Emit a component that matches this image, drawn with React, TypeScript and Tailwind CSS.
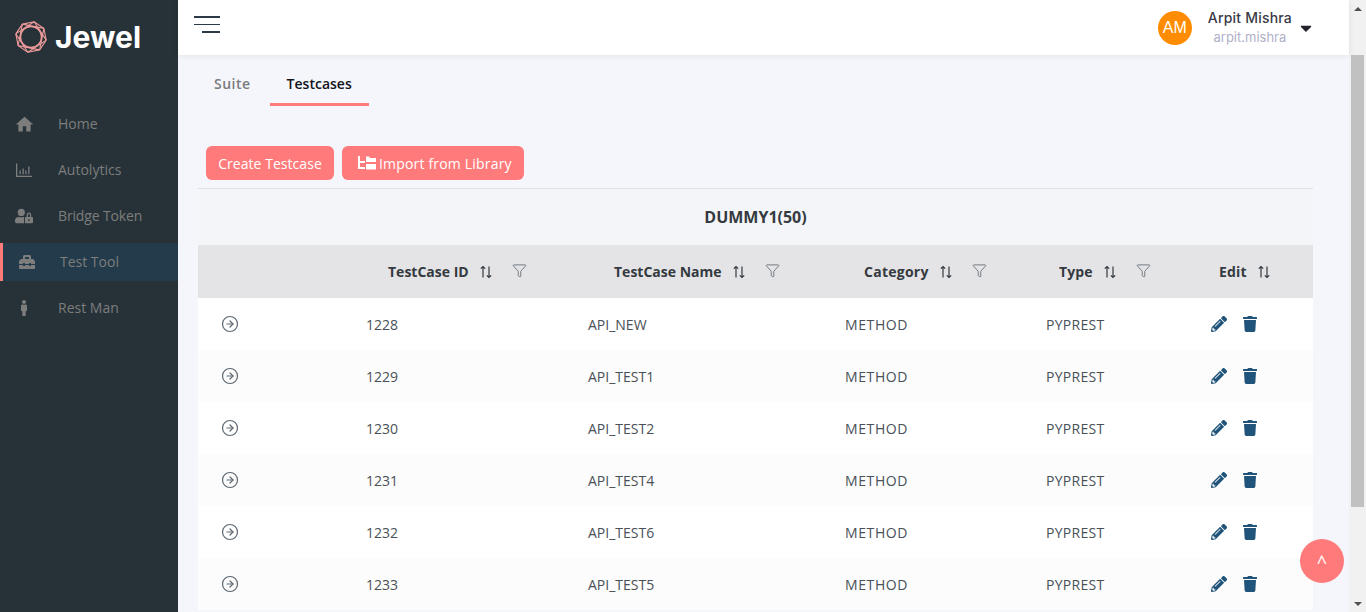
import React from "react";
import { FaUserLock, FaToolbox, FaMale, FaPencilAlt, FaTrash, FaCaretDown } from "react-icons/fa";
import { MdHome } from "react-icons/md";
import { CircleArrowRight, Funnel } from "lucide-react";

function ChartIcon({ size, className }: { size: number; className?: string }) {
  return (
    <svg width={size} height={size} viewBox="0 0 16 16" fill="currentColor" className={className}>
      <path d="M0 1.5h1.3v12.2H16V15H0z" />
      <path d="M3.5 8.5h1.3v3.7H3.5zM6.5 6.5h1.3v5.7H6.5zM9.2 8.5h1.3v3.7H9.2zM12.2 4.5h1.3v7.7h-1.3z" />
    </svg>
  );
}

const nav = [
  { label: "Home", Icon: MdHome, size: 21, labelClass: "" },
  { label: "Autolytics", Icon: ChartIcon, size: 16, labelClass: "" },
  { label: "Bridge Token", Icon: FaUserLock, size: 18, labelClass: "tracking-[-0.15px]" },
  { label: "Test Tool", Icon: FaToolbox, size: 16, active: true, labelClass: "" },
  { label: "Rest Man", Icon: FaMale, size: 16, labelClass: "" },
];

const rows = [
  ["1228", "API_NEW"],
  ["1229", "API_TEST1"],
  ["1230", "API_TEST2"],
  ["1231", "API_TEST4"],
  ["1232", "API_TEST6"],
  ["1233", "API_TEST5"],
];

function Sort() {
  return (
    <svg width="14" height="14" viewBox="0 0 14 14" fill="none" stroke="currentColor" strokeWidth="1.2" className="text-[#343a40] shrink-0">
      <path d="M4 12.5V1.5M1.8 3.7L4 1.5l2.2 2.2M10 1.5v11M7.8 10.3l2.2 2.2 2.2-2.2" />
    </svg>
  );
}

function Logo() {
  const pts = [0, 1, 2, 3, 4, 5, 6, 7].map((i) => {
    const a = (i * Math.PI) / 4 + 0.2;
    return [17 + 15.5 * Math.cos(a), 17 + 15.5 * Math.sin(a)];
  });
  const path = (step: number) =>
    pts.map((_, i) => {
      const p = pts[i];
      const q = pts[(i + step) % 8];
      return `M${p[0].toFixed(1)} ${p[1].toFixed(1)}L${q[0].toFixed(1)} ${q[1].toFixed(1)}`;
    }).join("");
  return (
    <svg width="34" height="34" viewBox="0 0 34 34" fill="none" stroke="#ee9a9a" strokeWidth="1.1">
      <path d={path(1)} />
      <path d={path(2)} />
      <circle cx="17" cy="17" r="10.5" stroke="#ee9a9a" strokeWidth="1.4" />
    </svg>
  );
}

function ImportIcon() {
  return (
    <svg width="18" height="14" viewBox="0 0 18 14" fill="white" className="shrink-0">
      <path d="M0 0h2v5h5v2H2v4h5v2H0z" />
      <path d="M8 0.5l3 0 1 1.5h6v4H8zM8 8h10v5.5H8z" />
    </svg>
  );
}

function Th({ label, pl, filter = true, labelClass = "" }: { label: string; pl: string; filter?: boolean; labelClass?: string }) {
  return (
    <th className="p-0 font-normal">
      <div className={`flex items-center ${pl}`}>
        <span className={`text-[14px] font-bold text-[#343a40] leading-5 mt-[1px] ${labelClass}`}>{label}</span>
        <span className="ml-[10px] flex"><Sort /></span>
        {filter && (
          <span className="ml-[19px] flex -mt-[3px]">
            <Funnel size={15} strokeWidth={1.5} className="text-[#6c757d]" />
          </span>
        )}
      </div>
    </th>
  );
}

export default function App() {
  return (
    <div className="flex h-[612px] w-[1366px] overflow-hidden bg-[#f5f6fb] font-['Open_Sans',sans-serif]">
      <aside className="w-[178px] shrink-0 bg-[#263238] flex flex-col">
        <div className="flex items-center h-[70px] pl-[14px] gap-[7px] mt-[2px]">
          <Logo />
          <span className="font-['Inter',sans-serif] text-[30px] font-bold text-white leading-none">Jewel</span>
        </div>
        <nav className="mt-[33px] flex flex-col">
          {nav.map(({ label, Icon, size, active, labelClass }) => (
            <div
              key={label}
              className={`flex items-center h-[38px] mb-[8px] text-[14px] text-[#7d7d7d] ${active ? "bg-[#233b4a] border-l-[3px] border-[#ff7b7b] pl-[16px]" : "pl-[16px]"}`}
            >
              <span className="w-[16px] flex justify-center"><Icon size={size} className="text-[#7d7d7d] shrink-0" /></span>
              <span className={`mb-[2px] ${labelClass} ${active ? "ml-[25px]" : "ml-[26px]"}`}>{label}</span>
            </div>
          ))}
        </nav>
      </aside>

      <div className="flex-1 min-w-0 flex flex-col relative">
        <header className="h-[55px] shrink-0 bg-white shadow-[0_1px_6px_rgba(0,0,0,0.08)] flex items-center pl-[16px] pr-[34px] z-10">
          <div className="flex flex-col items-end gap-[6px] w-[26px] -mt-[7px]">
            <span className="block h-[2px] w-[26px] bg-[#2b3a46]" />
            <span className="block h-[1px] w-[26px] bg-[#2b3a46]" />
            <span className="block h-[2px] w-[18px] bg-[#2b3a46]" />
          </div>
          <div className="ml-auto flex items-center">
            <div className="w-[34px] h-[34px] rounded-full bg-[#ff8c00] text-white text-[16px] flex items-center justify-center font-['Liberation_Sans',sans-serif]">AM</div>
            <div className="ml-[16px] flex flex-col items-center gap-[2px] font-['Inter',sans-serif]">
              <span className="text-[14px] font-medium text-[#3a3b45] leading-[17px] tracking-[0.2px]">Arpit Mishra</span>
              <span className="text-[13px] text-[#b0b0c8] leading-[18px]">arpit.mishra</span>
            </div>
            <FaCaretDown size={18} className="ml-[5px] text-[#22232b]" />
          </div>
        </header>

        <main className="flex-1 min-h-0 overflow-hidden pl-[20px] pr-[36px]">
          <div className="flex">
            <div className="h-[51px] flex items-center px-[16px] text-[14px] font-semibold tracking-[0.5px] text-[#7b7b7f] pt-[5px]">Suite</div>
            <div className="h-[51px] ml-[3px] flex items-center px-[17px] text-[14px] font-semibold text-[#14141c] pt-[9px] border-b-[3px] border-[#ff7b7b]">Testcases</div>
          </div>
          <div className="flex gap-[8px] mt-[40px] pl-[8px]">
            <button className="h-[34px] w-[128px] rounded-[6px] bg-[#ff7b7b] text-white text-[14px] tracking-[0.05px]">Create Testcase</button>
            <button className="h-[34px] w-[182px] pl-[16px] rounded-[6px] bg-[#ff7b7b] text-white text-[14px] tracking-[0.18px] flex items-center gap-[3px]">
              <ImportIcon />
              Import from Library
            </button>
          </div>
          <div className="mt-[8px] w-[1115px] border-t border-[#dee2e6]">
            <div className="h-[56px] bg-[#f4f5f9] flex items-center justify-center text-[16px] font-bold text-[#343a40]">DUMMY1(50)</div>
            <table className="w-full table-fixed border-collapse">
              <colgroup>
                <col className="w-[152px]" />
                <col className="w-[222px]" />
                <col className="w-[257px]" />
                <col className="w-[201px]" />
                <col className="w-[165px]" />
                <col className="w-[118px]" />
              </colgroup>
              <thead>
                <tr className="h-[53px] bg-[#e4e4e7]">
                  <th className="p-0" />
                  <Th label="TestCase ID" pl="pl-[38px]" />
                  <Th label="TestCase Name" pl="pl-[42px]" />
                  <Th label="Category" pl="pl-[35px]" labelClass="tracking-[0.25px]" />
                  <Th label="Type" pl="pl-[29px]" labelClass="tracking-[0.1px]" />
                  <Th label="Edit" pl="pl-[24px]" filter={false} labelClass="tracking-[0.2px]" />
                </tr>
              </thead>
              <tbody>
                {rows.map(([id, name], i) => (
                  <tr key={id} className={`h-[52px] text-[14px] text-[#495057] ${i % 2 ? "bg-[#fcfcfc]" : "bg-white"}`}>
                    <td className="p-0 pl-[23px]"><CircleArrowRight size={18} strokeWidth={1.6} className="text-[#5a6670]" /></td>
                    <td className="p-0 pl-[16px]">{id}</td>
                    <td className="p-0 pl-[16px]">{name}</td>
                    <td className="p-0 pl-[16px] tracking-[0.6px]">METHOD</td>
                    <td className="p-0 pl-[16px] tracking-[0.3px]">PYPREST</td>
                    <td className="p-0 pl-[16px]">
                      <div className="flex items-center gap-[15px]">
                        <FaPencilAlt size={16} className="text-[#20547a]" />
                        <FaTrash size={16} className="text-[#20547a]" />
                      </div>
                    </td>
                  </tr>
                ))}
              </tbody>
            </table>
          </div>
        </main>

        <button className="absolute left-[1122px] top-[539px] w-[44px] h-[44px] rounded-full bg-[#ff7b7b] text-white text-[18px] pt-[2px] flex items-center justify-center z-20 font-['Open_Sans',sans-serif]">^</button>
      </div>

      <div className="w-[17px] shrink-0 bg-[#f1f1f1] flex flex-col items-center relative">
        <div className="h-[17px] flex items-center justify-center"><span className="block w-0 h-0 border-x-[4px] border-x-transparent border-b-[4px] border-b-[#505050]" /></div>
        <div className="mt-[38px] w-[13px] h-[452px] bg-[#c1c1c1]" />
        <div className="mt-auto h-[17px] flex items-center justify-center"><span className="block w-0 h-0 border-x-[4px] border-x-transparent border-t-[4px] border-t-[#505050]" /></div>
      </div>
    </div>
  );
}
